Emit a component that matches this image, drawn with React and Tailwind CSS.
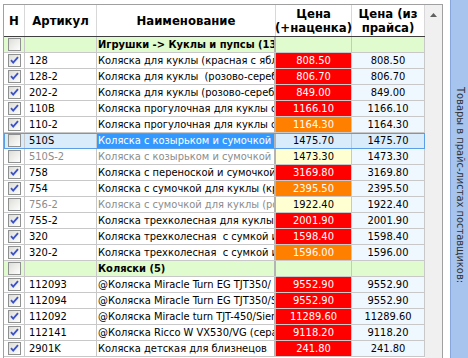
import React from "react";

const rows = [
  { group: true, name: "Игрушки -> Куклы и пупсы (13)" },
  { art: "128", name: "Коляска для куклы (красная с яблочками)", price: "808.50", list: "808.50", tone: "red", on: true },
  { art: "128-2", name: "Коляска для куклы  (розово-серебристая)", price: "806.70", list: "806.70", tone: "red", on: true },
  { art: "202-2", name: "Коляска для куклы (розово-серебристая)", price: "849.00", list: "849.00", tone: "red", on: true },
  { art: "110B", name: "Коляска прогулочная для куклы с корзиной", price: "1166.10", list: "1166.10", tone: "red", on: true },
  { art: "110-2", name: "Коляска прогулочная для куклы с корзиной", price: "1164.30", list: "1164.30", tone: "orange", on: true },
  { art: "510S", name: "Коляска с козырьком и сумочкой для куклы", price: "1475.70", list: "1475.70", tone: "sel", selected: true },
  { art: "510S-2", name: "Коляска с козырьком и сумочкой для куклы", price: "1473.30", list: "1473.30", tone: "yellow", off: true },
  { art: "758", name: "Коляска с переноской и сумочкой для куклы", price: "3169.80", list: "3169.80", tone: "red", on: true },
  { art: "754", name: "Коляска с сумочкой для куклы (красная)", price: "2395.50", list: "2395.50", tone: "orange", on: true },
  { art: "756-2", name: "Коляска с сумочкой для куклы (розовая)", price: "1922.40", list: "1922.40", tone: "yellow", off: true },
  { art: "755-2", name: "Коляска трехколесная для куклы", price: "2001.90", list: "2001.90", tone: "red", on: true },
  { art: "320", name: "Коляска трехколесная  с сумкой и корзиной", price: "1598.40", list: "1598.40", tone: "red", on: true },
  { art: "320-2", name: "Коляска трехколесная  с сумкой и корзиной", price: "1596.00", list: "1596.00", tone: "orange", on: true },
  { group: true, name: "Коляски (5)" },
  { art: "112093", name: "@Коляска Miracle Turn EG TJT350/ Fire", price: "9552.90", list: "9552.90", tone: "red", on: true },
  { art: "112094", name: "@Коляска Miracle Turn EG TJT350/Sky", price: "9552.90", list: "9552.90", tone: "red", on: true },
  { art: "112092", name: "@Коляска Miracle turn TJT-450/Siena", price: "11289.60", list: "11289.60", tone: "red", on: true },
  { art: "112141", name: "@Коляска Ricco W VX530/VG (серая)", price: "9118.20", list: "9118.20", tone: "red", on: true },
  { art: "2901K", name: "Коляска детская для близнецов", price: "241.80", list: "241.80", tone: "red", on: true },
];

const toneClass = {
  red: "bg-[#ff0000] text-white",
  orange: "bg-[#ff8000] text-white",
  yellow: "bg-[#ffffd2] text-black",
  sel: "bg-[#d9ecfc] text-black",
};

function Check({ checked }) {
  return (
    <svg width="13" height="13" viewBox="0 0 13 13">
      <defs>
        <linearGradient id="cbg" x1="0" y1="0" x2="1" y2="1">
          <stop offset="0" stopColor="#dcdcd6" />
          <stop offset="1" stopColor="#ffffff" />
        </linearGradient>
      </defs>
      <rect x="0.5" y="0.5" width="12" height="12" fill="url(#cbg)" stroke="#8f9090" />
      {checked && (
        <path d="M3 6.2 L5.2 8.6 L10 3.2" fill="none" stroke="#3d52c4" strokeWidth="1.8" />
      )}
    </svg>
  );
}

function Row({ r }) {
  if (r.group) {
    return (
      <div className="flex h-[16px] border-b border-[#c8c8c8] bg-[#e0fbcd]">
        <div className="w-[21px] flex-none flex items-center justify-center border-r border-[#c8c8c8]">
          <Check />
        </div>
        <div className="w-[72px] flex-none border-r border-[#c8c8c8]" />
        <div className="w-[179px] flex-none pl-[1px] border-r-2 border-[#b4b4b4] overflow-hidden whitespace-pre font-bold leading-[15px] text-black">
          {r.name}
        </div>
        <div className="w-[76px] flex-none border-r border-[#c8c8c8]" />
        <div className="w-[73px] flex-none border-r border-[#c8c8c8]" />
      </div>
    );
  }
  const txt = r.off ? "text-[#8c8c8c]" : "text-black";
  return (
    <div
      className={
        "flex h-[16px] border-b border-[#c8c8c8] " +
        (r.selected ? "bg-[#d9ecfc] outline outline-1 -outline-offset-1 outline-[#5c9ee6]" : "bg-white")
      }
    >
      <div className="w-[21px] flex-none flex items-center justify-center border-r border-[#c8c8c8]">
        <Check checked={r.on} />
      </div>
      <div className={"w-[72px] flex-none pl-[4px] border-r border-[#c8c8c8] leading-[15px] " + txt}>{r.art}</div>
      <div
        className={
          "w-[179px] flex-none pl-[1px] border-r-2 border-[#b4b4b4] overflow-hidden whitespace-pre leading-[15px] " +
          (r.selected ? "bg-[#3399ff] text-white" : txt)
        }
      >
        {r.name}
      </div>
      <div className={"w-[76px] flex-none text-center border-r border-[#c8c8c8] leading-[15px] " + toneClass[r.tone]}>
        {r.price}
      </div>
      <div
        className={
          "w-[73px] flex-none text-center border-r border-[#c8c8c8] leading-[15px] text-black " +
          (r.selected ? "bg-[#d9ecfc]" : "bg-[#f0f8ff]")
        }
      >
        {r.list}
      </div>
    </div>
  );
}

export default function App() {
  return (
    <div className="w-[468px] h-[358px] bg-white flex overflow-hidden text-[11px] font-['DejaVu_Sans_Condensed','DejaVu_Sans',sans-serif]">
      <div className="ml-[3px] mt-[4px] flex border-l border-t border-[#a0a0a0] h-[354px]">
        <div className="w-[421px] flex-none">
          <div className="flex h-[32px] border-b border-[#404040] bg-white font-bold text-[13px] leading-[14px] text-black">
            <div className="w-[21px] flex-none flex items-center justify-center border-r border-[#d8d8d8]">Н</div>
            <div className="w-[72px] flex-none flex items-center justify-center border-r border-[#d8d8d8]">Артикул</div>
            <div className="w-[179px] flex-none flex items-center justify-center border-r border-[#d8d8d8]">Наименование</div>
            <div className="w-[76px] flex-none flex items-center justify-center text-center border-r border-[#d8d8d8]">
              Цена<br />(+наценка)
            </div>
            <div className="w-[73px] flex-none flex items-center justify-center text-center border-r border-[#d8d8d8]">
              Цена (из<br />прайса)
            </div>
          </div>
          {rows.map((r, i) => (
            <Row key={i} r={r} />
          ))}
        </div>
        <div className="w-[18px] flex-none bg-[#f0f0f0] border-r border-[#a0a0a0] flex justify-center pt-[8px]">
          <svg width="7" height="4" viewBox="0 0 7 4">
            <path d="M0 4 L3.5 0 L7 4 Z" fill="#606060" />
          </svg>
        </div>
      </div>
      <div className="ml-[7px] w-[18px] flex-none h-[358px] bg-[#a6c4ee] border-l border-[#86a6dc] flex items-center justify-center pt-[12px]">
        <span className="[writing-mode:vertical-rl] text-[11px] text-[#303030] whitespace-nowrap">
          Товары в прайс-листах поставщиков:
        </span>
      </div>
    </div>
  );
}
